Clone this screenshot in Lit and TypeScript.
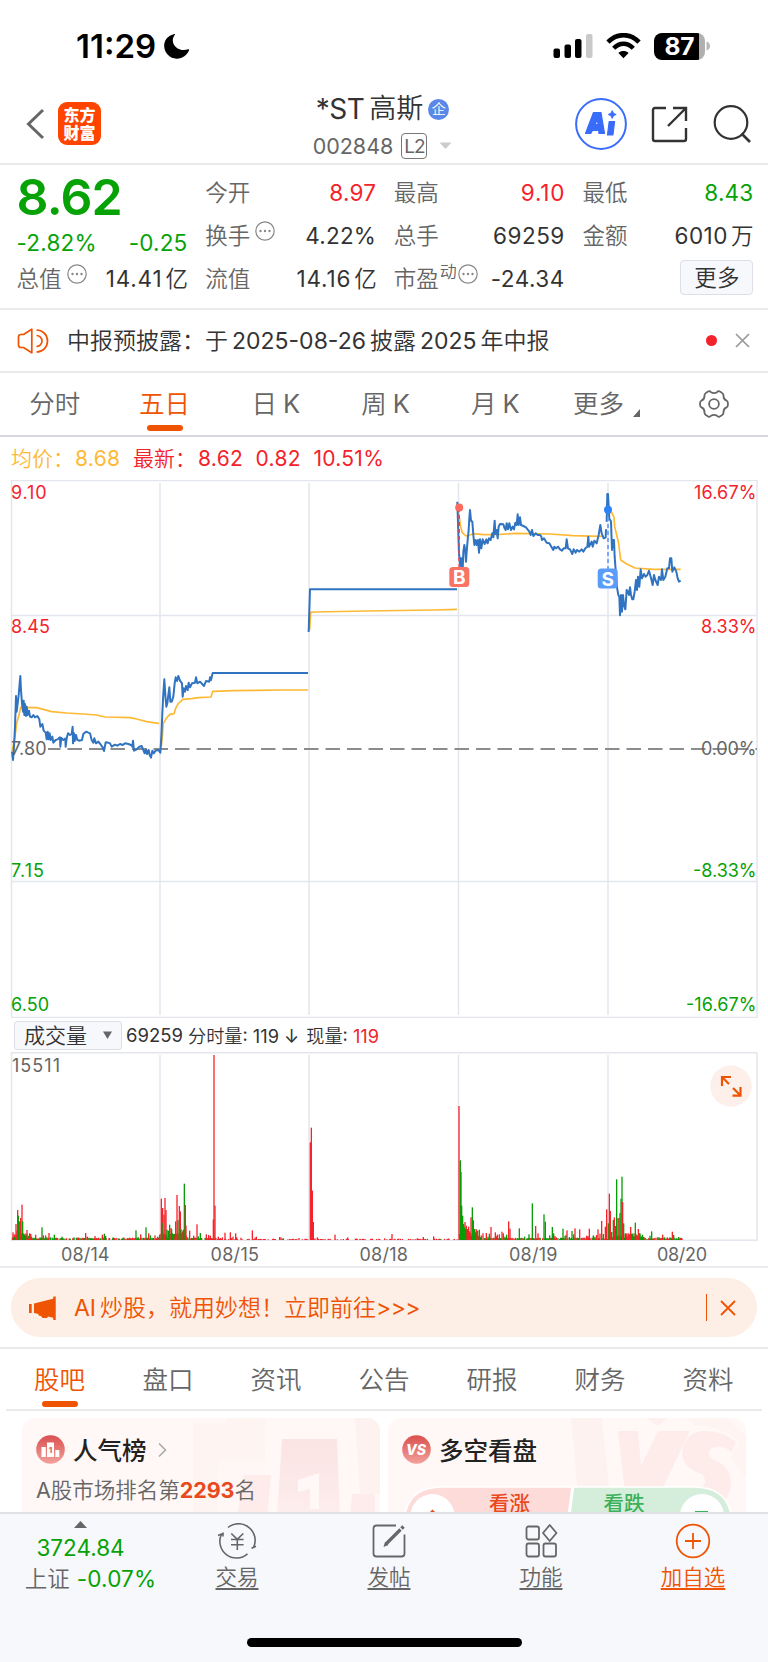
import { LitElement, html, svg, css } from "lit";
import { customElement } from "lit/decorators.js";

/* ---------- series data (thirds of a pixel) ---------- */

const PRICE_A =
  "36,515 39,540 42,500 45,440 48,348 50,395 53,370 56,345 59,310 61,288 63,330 66,370 69,395 71,362 73,405 75,372 78,408 80,380 83,405 87,392 90,410 95,412 100,405 105,412 112,408 118,418 121,440 127,432 131,452 137,458 140,478 143,455 146,478 149,460 152,480 157,470 160,488 167,480 173,478 180,472 181,500 184,474 190,480 196,476 197,500 200,475 204,460 210,465 215,462 218,440 219,490 222,460 224,483 228,465 232,480 240,482 246,480 250,462 258,455 265,458 270,460 275,480 280,488 283,475 288,490 295,485 303,495 308,502 312,513 317,487 325,488 330,490 335,500 345,494 352,497 360,492 368,495 375,490 385,492 393,495 397,500 399,482 402,512 410,508 418,500 425,498 430,510 434,520 438,508 441,522 446,510 449,525 453,533 457,512 461,520 467,512 472,510 477,512 481,518 484,470 487,400 490,340 493,298 496,345 499,380 502,370 505,345 508,322 511,365 515,365 520,350 524,310 527,292 531,303 535,288 540,302 546,310 548,350 551,325 555,335 558,318 563,330 566,308 570,322 576,310 585,308 588,292 592,310 600,305 612,318 618,303 628,305 630,292 633,300 638,279 924,279";
const PRICE_B = "926,156 930,28 1371,28";
const PRICE_C =
  "52,65 54,130 57,220 60,250 62,235 64,268 66,235 68,270 70,215 73,195 76,215 78,245 80,215 83,180 86,150 88,115 90,90 93,122 97,125 100,165 103,195 107,180 110,195 114,180 117,218 120,178 124,205 128,178 134,192 139,178 143,190 147,175 152,180 157,160 160,172 164,122 166,162 170,150 173,175 176,140 180,132 190,133 194,145 197,150 200,130 204,148 208,130 213,150 218,140 222,148 226,128 230,135 233,103 236,135 240,112 243,135 250,138 258,142 264,150 268,155 272,165 276,150 280,168 287,160 293,165 300,165 304,170 306,180 312,175 320,188 328,190 334,200 340,210 343,200 348,205 354,200 360,208 366,212 371,205 377,205 380,178 384,205 390,208 397,222 401,208 407,218 411,210 418,215 425,208 430,215 436,205 442,200 445,170 447,200 455,185 458,200 463,182 470,190 476,165 481,135 485,160 491,175 497,172 498,150 500,152";
const PRICE_D =
  "500,125 502,42 504,42 506,80 508,118 511,120 513,125 516,210 519,180 522,180 524,230 527,270 531,322 535,345 538,350 540,406 543,345 546,395 549,345 552,375 556,388 560,330 564,335 567,345 570,322 573,345 577,358 580,358 584,335 588,300 591,330 594,290 598,320 602,268 606,295 612,282 617,290 622,285 627,272 632,290 638,315 642,285 646,300 653,315 657,290 663,300 666,268 670,300 676,290 682,265 687,265 690,235 694,235 697,275 703,262 709,275 713,295 717,305 722,302";
const AVG_A =
  "36,515 45,470 50,430 57,405 62,382 110,383 130,388 155,395 200,399 250,402 290,405 315,411 390,413 410,417 440,425 460,428 477,430";
const AVG_A2 =
  "484,500 487,470 490,430 497,418 503,410 510,403 522,401 527,385 535,370 542,365 548,358 575,356 595,353 633,351 638,334 700,332 850,330 924,330";
const AVG_B = "929,150 932,97 945,96 1100,93 1300,90 1371,88";
const AVG_C =
  "54,75 56,100 62,140 67,158 78,168 90,165 100,161 130,164 180,163 230,160 330,162 400,167 480,169 490,168";
const AVG_D =
  "503,98 515,97 522,112 524,140 530,165 536,190 542,240 560,252 585,264 640,268 722,268";

/* position, top, colour */
const VOLUME =
  "39,665r 43,680g 48,640r 51,660r 53,598r 55,615g 59,632r 62,622r 66,582r 68,632g 73,672g 77,675g 81,658r 85,683r 92,670r 95,678g 102,682g 107,672r 115,684r 120,680g 126,650g 130,674r 137,674r 141,680g 147,667r 151,680g 163,672g 173,684r 180,686r 186,678g 195,684g 210,684g 222,680g 236,681r 251,682r 257,667r 262,678r 272,683g 285,676r 290,683r 296,681r 307,672r 313,669g 317,676g 327,682r 339,681g 344,682r 358,684r 372,681r 388,685g 397,681r 408,659g 415,680g 422,671r 430,683g 438,650g 446,668r 451,674g 460,682g 465,674r 473,678g 479,672g " +
  "484,564r 488,592r 486,637g 492,612r 495,562r 498,598r 501,657g 505,660g 509,642g 513,652r 515,656g 517,668g 522,678r 527,632r 531,553r 534,628g 538,586r 541,602r 543,655g 547,662r 550,657g 553,519g 556,583r 558,645r 563,680g 569,660r 575,683g 581,675r 585,680r 591,641r 595,677g 601,667g 605,682r 619,671r 626,673r 631,675r 636,684r 640,626r 642,133r 645,585r 655,678r 661,682r 667,680r 675,666r 691,665r 695,682r 699,678r 707,668r 710,680r 723,681r 757,659r 765,681r 769,678r 780,685r 791,685r 820,684r 839,679r 843,680r 850,683r 870,685r 897,682r 920,685r " +
  "931,395r 934,351r 937,540r 940,634r 945,683r 952,680r 965,685r 975,685r 985,685r 1005,672r 1030,685r 1043,680r 1070,684r 1095,685r 1130,685r 1154,683r 1176,670r 1196,684r 1207,685r 1252,683r 1270,679r 1301,677r 1318,686r 1345,684r 1362,686r " +
  "1377,286r 1381,449g 1383,484g 1385,585g 1388,615g 1391,640g 1395,634r 1393,650g 1397,655g 1399,645r 1402,655g 1406,648r 1409,662r 1413,620r 1417,590g 1420,629g 1424,655g 1429,656r 1427,665g 1433,660r 1438,657g 1443,680g 1449,668r 1455,682g 1459,667r 1468,669g 1464,678g 1473,649r 1479,682r 1486,665r 1489,677r 1492,672r 1498,671r 1501,682g 1506,663r 1510,668r 1515,678g 1520,672g 1526,632r 1530,654r 1536,682r 1544,686r 1552,683g 1558,653g 1564,686r 1574,678g 1587,671g 1597,578g 1601,683r 1607,646r 1614,668r 1620,682g 1632,611g 1636,633g 1641,682g 1649,674g 1657,649g 1661,668g 1665,676r 1669,680r 1682,682g 1689,654g 1695,676g 1698,673g 1701,659r 1708,679g 1716,661g 1721,671g 1725,653r 1732,681g 1739,656r 1747,684r 1755,681r 1760,675r 1764,676r 1768,654r 1780,674g 1785,678g 1790,673r 1794,656r 1800,669r 1805,631r 1810,670g 1816,648r 1820,596r " +
  "1825,638g 1828,549r 1831,601r 1835,664g 1840,628g 1843,620r 1847,646g 1850,506g 1854,622g 1857,622r 1860,607g 1863,564g 1866,498g 1868,574r 1871,638g 1876,668g 1881,675r 1887,672r 1892,649r 1897,669g 1902,668r 1906,636g 1911,674r 1915,655r 1920,671g 1926,676g 1932,679r 1938,684g 1950,675g 1955,662g 1964,683r 1974,679g 1988,672r 1994,680g 2002,680r 2010,680g 2017,663r 2021,673g 2036,679g 2042,682r 2046,683r";

const volumeBars = VOLUME.split(" ").map((t) => {
  const [x, rest] = t.split(",");
  return { x: +x / 3, h: (688 - parseInt(rest)) / 3, up: rest.endsWith("r") };
});

/* low trading between the listed peaks */
const quietBars = (() => {
  const out: { x: number; h: number; up: boolean }[] = [];
  let s = 7;
  const rnd = () => ((s = (s * 16807) % 2147483647) / 2147483647);
  for (let x = 12.5; x < 682; x += 0.9) {
    const dense = x < 32 || (x > 161 && x < 187) || (x > 459 && x < 482) || (x > 609 && x < 644);
    const calm = x > 216 && x < 458;
    const r = rnd();
    const up = rnd() > (calm ? 0.02 : 0.5);
    if (dense) out.push({ x, h: 2 + r * 5, up });
    else if (calm) {
      if (r > 0.62) out.push({ x, h: 0.6 + rnd() * 0.7, up });
    } else if (r > 0.22) out.push({ x, h: 0.6 + r * 1.8, up });
  }
  return out;
})();

const bar = (b: { x: number; h: number; up: boolean }) => svg`<rect
  class=${b.up ? "up" : "down"} x=${b.x - 0.65} y=${188 - b.h} width="1.3" height=${b.h}></rect>`;

const base = css`
  * { box-sizing: border-box; }
  :host {
    display: block;
    font-family: Inter, "Noto Sans CJK SC DemiLight", "Noto Sans CJK SC", sans-serif;
    color: #333;
  }
  svg { display: block; flex: none; }
  .red { color: #f4222a; }
  .green { color: #06a206; }
`;

/* ---------- status bar ---------- */
@customElement("status-bar")
class StatusBar extends LitElement {
  static styles = [base, css`
    .bar { height: 90px; display: flex; align-items: center; padding: 2px 57px 0 76px; color: #000; }
    .time { font-size: 33px; font-weight: 600; letter-spacing: 0; line-height: 40px; width: 82px; white-space: nowrap; }
    .moon { margin: 0 auto 0 5px; }
    .signal { margin-right: 13px; }
    .wifi { margin-right: 13px; }
    .battery { width: 51px; height: 27px; border-radius: 8px; display: grid; place-items: center;
      background: linear-gradient(90deg, #000 88%, #b0b0b0 88%); color: #fff;
      font-size: 24.500px; font-weight: 700; line-height: 27px; letter-spacing: -0.2px; }
    .cap { margin-left: 1px; }
  `];
  render() {
    return html`<div class="bar">
      <span class="time">11:29</span>
      <svg class="moon" width="27" height="27" viewBox="0 0 27 27"><path d="M11.5 1C4.8 2.400.8 7.500 1.200 13.600 1.600 20.500 7 25.600 13.500 25.700c6 .1 10.600-3.300 12.600-8.700.2-.6-.3-1-.9-.7C18 19 9.600 14.500 9.800 7c.1-2 .8-3.800 2.100-5.300.3-.4 0-.8-.4-.7z"/></svg>
      <svg class="signal" width="40" height="26" viewBox="0 0 40 26">
        <rect x="0.500" y="15.500" width="6.500" height="9.500" rx="2"/><rect x="11.500" y="11.500" width="6.500" height="13.500" rx="2"/>
        <rect x="22" y="6" width="6.500" height="19" rx="2"/><rect x="33" y="1" width="6.500" height="24" rx="2" fill="#c9c9c9"/></svg>
      <svg class="wifi" width="35" height="26" viewBox="0 0 35 26"><g fill="none" stroke="#000">
        <path d="M2 9.200C11-.2 24-.2 33 9.200" stroke-width="4.600"/><path d="M7.700 15.200c5.800-6 13.800-6 19.600 0" stroke-width="4.400"/></g>
        <path d="M17.500 25.200l-5.100-5.300c3-2.600 7.200-2.600 10.200 0z"/></svg>
      <span class="battery">87</span>
      <svg class="cap" width="5" height="10" viewBox="0 0 5 10"><path d="M.5.5C3 1 4 3 4 5S3 9 .5 9.500z" fill="#b8b8b8"/></svg>
    </div>`;
  }
}

/* ---------- title bar ---------- */
@customElement("title-bar")
class TitleBar extends LitElement {
  static styles = [base, css`
    .bar { height: 75px; border-bottom: 2px solid #ebebeb; display: grid; grid-template-columns: 1fr auto 1fr; padding: 0 17px 0 26px; }
    .left { display: flex; align-items: center; gap: 13px; padding-bottom: 7px; }
    .logo { width: 43px; height: 43px; border-radius: 9px; background: #ff4400; color: #fff; font-family: "Noto Sans CJK SC"; font-weight: 900;
      font-size: 16px; line-height: 18px; text-align: center; padding-top: 3px; }
    .mid { display: flex; flex-direction: column; align-items: center; margin-right: 12px; }
    .name { display: flex; align-items: center; height: 38px; font-size: 27px; line-height: 38px; white-space: nowrap; }
    .latin { letter-spacing: -0.5px; margin-right: 5px; font-size: 28px; }
    .corp { width: 21px; height: 21px; border-radius: 50%; background: #5b88e6; color: #fff; font-size: 14px; line-height: 20px; text-align: center; margin-left: 5px; font-weight: 500; }
    .code { display: flex; align-items: center; height: 36px; font-size: 21.500px; color: #666; }
    .l2 { border: 1px solid #777; border-radius: 4px; height: 26px; width: 26px; font-size: 19px; line-height: 26px; text-align: center; letter-spacing: -1px; margin: 0 12px 0 8px; }
    .right { display: flex; align-items: center; justify-content: flex-end; padding-bottom: 6px; }
    .ai { margin-right: 24px; } .share { margin-right: 25px; }
  `];
  render() {
    return html`<div class="bar">
      <div class="left">
        <svg width="19" height="32" viewBox="0 0 19 32"><path d="M17 2L2.500 16 17 30" fill="none" stroke="#666" stroke-width="3"/></svg>
        <div class="logo">东方<br>财富</div>
      </div>
      <div class="mid">
        <div class="name"><span class="latin">*ST</span>高斯<span class="corp">企</span></div>
        <div class="code"><span>002848</span><span class="l2">L2</span>
          <svg width="13" height="8" viewBox="0 0 13 8"><path d="M.5.500h12L6.500 7z" fill="#ccc"/></svg></div>
      </div>
      <div class="right">
        <svg class="ai" width="52" height="52" viewBox="0 0 52 52"><circle cx="26" cy="26" r="24.900" fill="#fff" stroke="#3a6cfb" stroke-width="2"/>
          <g fill="#3a6cfb" stroke="#3a6cfb" stroke-width="1.200" stroke-linejoin="round"><path fill-rule="evenodd" d="M10.500 35.500L18.500 14.500h7.500L29.500 35.500h-5.500L23.700 32.500h-6.200l-1.800 3zM20 26.500h3l-.5-5z"/>
          <path d="M34.200 23.500h5.400l-1.700 13.500h-5.400z"/></g><path d="M37.200 12.500l1.300 2.700 2.700 1.300-2.700 1.300-1.300 2.700-1.300-2.700-2.700-1.300 2.700-1.300z" fill="#3a6cfb" stroke="#3a6cfb" stroke-width=".8"/></svg>
        <svg class="share" width="37" height="37" viewBox="0 0 37 37"><path d="M15 2H4Q2 2 2 4V33Q2 35 4 35H33Q35 35 35 33V22M22 2H35V15M35 2L17 20" fill="none" stroke="#333" stroke-width="2.400"/></svg>
        <svg width="38" height="38" viewBox="0 0 38 38"><circle cx="18" cy="17.500" r="16.300" fill="none" stroke="#333" stroke-width="2.200"/><path d="M28.500 28.500L37 37" stroke="#333" stroke-width="2.600"/></svg>
      </div>
    </div>`;
  }
}

/* ---------- quote figures ---------- */
@customElement("quote-panel")
class QuotePanel extends LitElement {
  static styles = [base, css`
    .panel { height: 145px; border-bottom: 2px solid #ebebeb; display: grid; grid-template-columns: repeat(4, 171px); justify-content: space-between; padding: 6px 14.500px 0 16.500px; font-size: 22.500px; }
    .cell { height: 43px; line-height: 43px; display: flex; align-items: center; white-space: nowrap; }
    .cell > :last-child { margin-left: auto; letter-spacing: 0.2px; }
    .cell > .ones { letter-spacing: 0.8px; margin-right: -0.5px; }
    .cell > .wide { letter-spacing: 0.5px; }
    .label { color: #666; }
    .price { font-size: 50px; font-weight: 600; height: 53px; line-height: 53px; letter-spacing: -0.8px; }
    .change { height: 33px; line-height: 33px; display: flex; justify-content: space-between; padding-top: 2px; letter-spacing: 0.2px; }
    .last { height: 43px; }
    .dots { margin: -10px 0 0 5px; }
    .tight { margin-left: 1px; }
    .sup { font-size: 17px; color: #666; margin: -12px 0 0 1px; }
    .unit { margin-left: 3px; letter-spacing: 0; }
    .cell > .more { height: 35px; width: 73px; border: 1px solid #dcdfe8; border-radius: 4px; background: #f7f8fb; line-height: 33px; text-align: center; margin-top: -3px; }
  `];
  dots(cls: string) {
    return html`<svg class=${"dots " + cls} width="20" height="20" viewBox="0 0 20 20"><circle cx="10" cy="10" r="9.200" fill="none" stroke="#888" stroke-width="1.200"/><g fill="#888"><circle cx="5.500" cy="10" r="1.200"/><circle cx="10" cy="10" r="1.200"/><circle cx="14.500" cy="10" r="1.200"/></g></svg>`;
  }
  render() {
    return html`<div class="panel">
      <div>
        <div class="price green">8.62</div>
        <div class="change green"><span>-2.82%</span><span>-0.25</span></div>
        <div class="cell last"><span class="label">总值</span>${this.dots("")}<span class="ones">14.41<span class="unit">亿</span></span></div>
      </div>
      <div>
        <div class="cell"><span class="label">今开</span><span class="red">8.97</span></div>
        <div class="cell"><span class="label">换手</span>${this.dots("")}<span>4.22%</span></div>
        <div class="cell"><span class="label">流值</span><span class="ones">14.16<span class="unit">亿</span></span></div>
      </div>
      <div>
        <div class="cell"><span class="label">最高</span><span class="red ones">9.10</span></div>
        <div class="cell"><span class="label">总手</span><span class="wide">69259</span></div>
        <div class="cell"><span class="label">市盈</span><span class="sup">动</span>${this.dots("tight")}<span class="wide">-24.34</span></div>
      </div>
      <div>
        <div class="cell"><span class="label">最低</span><span class="green">8.43</span></div>
        <div class="cell"><span class="label">金额</span><span class="wide">6010<span class="unit">万</span></span></div>
        <div class="cell"><span class="more">更多</span></div>
      </div>
    </div>`;
  }
}

/* ---------- notice ---------- */
@customElement("notice-row")
class NoticeRow extends LitElement {
  static styles = [base, css`
    .row { height: 63px; border-bottom: 2px solid #ebebeb; display: flex; align-items: center; padding: 0 18px 0 17px; font-size: 23px; white-space: nowrap; }
    .text { margin: 0 auto 0 18px; padding-bottom: 3px; }
    .num { margin: 0 4px; }
    .dot { width: 11px; height: 11px; border-radius: 50%; background: #f4222a; margin-right: 18px; }
  `];
  render() {
    return html`<div class="row">
      <svg width="32" height="26" viewBox="0 0 32 26"><g fill="none" stroke="#ee5404" stroke-width="1.700" stroke-linejoin="round"><path d="M14.800 1.200V24.800L6.500 19.500H4Q1.500 19.500 1.500 17V9Q1.500 6.500 4 6.500H6.500z"/><path d="M19.500 7.500a5.500 5.500 0 0 1 0 11M19.500 2a11 11 0 0 1 0 22"/></g></svg>
      <span class="text">中报预披露：于<span class="num">2025-08-26</span>披露<span class="num">2025</span>年中报</span>
      <span class="dot"></span>
      <svg width="15" height="15" viewBox="0 0 15 15"><path d="M1 1L14 14M14 1L1 14" stroke="#999" stroke-width="1.700"/></svg>
    </div>`;
  }
}

/* ---------- period tabs ---------- */
@customElement("period-tabs")
class PeriodTabs extends LitElement {
  static styles = [base, css`
    .tabs { height: 64px; border-bottom: 2px solid #d8d8dc; display: grid; grid-template-columns: repeat(7, 1fr); font-size: 25.500px; color: #666; }
    .tab { display: flex; flex-direction: column; align-items: center; padding-top: 12px; line-height: 38px; }
    .line { display: flex; }
    .k { margin-left: 6px; margin-right: -3px; }
    .on { color: #ee5404; }
    .mark { width: 36px; height: 6px; border-radius: 3px; background: #ee5404; margin-top: 2px; }
    .corner { margin: 24px -6px 0 9px; }
    .gear { margin-top: 5px; margin-left: 2px; }
  `];
  render() {
    return html`<div class="tabs">
      <div class="tab">分时</div>
      <div class="tab on">五日<span class="mark"></span></div>
      <div class="tab"><span class="line">日<span class="k">K</span></span></div>
      <div class="tab"><span class="line">周<span class="k">K</span></span></div>
      <div class="tab"><span class="line">月<span class="k">K</span></span></div>
      <div class="tab"><span class="line">更多<svg class="corner" width="7" height="8" viewBox="0 0 7 8"><path d="M7 0V8H0z" fill="#666"/></svg></span></div>
      <div class="tab"><svg class="gear" width="30" height="28" viewBox="0 0 30 28"><g fill="none" stroke="#666" stroke-width="1.800" stroke-linejoin="round"><path d="M9.500 1.300Q11 .8 12 2.200Q15 4 18 2.200Q19 .8 20.500 1.300Q24.500 3.400 24.500 5.300Q24.300 9.500 27.600 10.700Q29 11.200 29 14T27.600 17.300Q24.300 18.500 24.500 22.700Q24.500 24.600 20.500 26.700Q19 27.200 18 25.800Q15 24 12 25.800Q11 27.200 9.500 26.700Q5.500 24.600 5.500 22.700Q5.700 18.500 2.400 17.300Q1 16.800 1 14T2.400 10.700Q5.700 9.500 5.500 5.300Q5.500 3.400 9.500 1.300z"/><circle cx="15" cy="14" r="4.900"/></g></svg></div>
    </div>`;
  }
}

/* ---------- charts ---------- */
@customElement("stock-charts")
class StockCharts extends LitElement {
  static styles = [base, css`
    .legend { height: 43px; padding: 0 0 0 11px; display: flex; align-items: baseline; font-size: 21px; line-height: 43px; white-space: nowrap; }
    .avg { color: #fdb935; width: 122px; }
    .avg span { letter-spacing: 0.3px; margin-left: 1px; }
    .legend .v { margin-right: 12.500px; letter-spacing: 0.3px; }
    .legend .name { margin-right: 2px; }
    .grid { stroke: #e4e6ee; fill: none; stroke-width: 1.500; }
    .dash { stroke: #8c8c8c; stroke-width: 1.800; stroke-dasharray: 14.500 7; }
    .price { stroke: #2f73c1; stroke-width: 6; fill: none; stroke-linejoin: round; }
    .mean { stroke: #fdb935; stroke-width: 5; fill: none; stroke-linejoin: round; }
    text { font-size: 18px; }
    .t-red { fill: #f4222a; } .t-green { fill: #06a206; } .t-grey { fill: #666; }
    .flag { fill: #fff; font-weight: 700; font-size: 19px; text-anchor: middle; }
    .up { fill: #f4222a; } .down { fill: #069c06; }
    .vol-head { height: 34px; display: flex; align-items: center; padding-left: 14px; font-size: 18.200px; white-space: nowrap; }
    .pick { width: 108px; height: 29px; margin-right: 4px; padding: 0 9px 0 9px; border: 1px solid #dcdfe8; border-radius: 3px; background: #f7f8fb; font-size: 21px; line-height: 27px; display: flex; align-items: center; justify-content: space-between; }
    .total { font-size: 18.500px; margin-right: 5px; }
    .now { margin-left: 7px; }
    .dates { height: 27px; border-bottom: 2px solid #ececf0; }
  `];
  render() {
    return html`
      <div class="legend"><span class="avg">均价：<span>8.68</span></span><span class="red name">最新：</span><span class="red v">8.62</span><span class="red v">0.82</span><span class="red v">10.51%</span></div>
      <svg width="768" height="538" viewBox="0 480 768 538">
        <path class="grid" d="M11.500 480.500H757V1017.500H11.500zM11.500 615.500H757M11.500 881.500H757M160 483V1015M309 483V1015M458.500 483V1015M608 483V1015"/>
        <path class="dash" d="M48 749H757" stroke-dashoffset="2"/>
        <text class="t-red" x="11" y="498.500" textLength="35.500">9.10</text>
        <text class="t-red" x="11" y="632.500" textLength="39">8.45</text>
        <text class="t-green" x="11" y="876.500" textLength="33">7.15</text>
        <text class="t-green" x="11" y="1010.500" textLength="38">6.50</text>
        <text class="t-red" x="694" y="498.500" textLength="62.500">16.67%</text>
        <text class="t-red" x="701" y="632.500" textLength="55.500">8.33%</text>
        <text class="t-grey" x="701" y="754.500" textLength="55.500">0.00%</text>
        <text class="t-green" x="693" y="876.500" textLength="63.500">-8.33%</text>
        <text class="t-green" x="686" y="1010.500" textLength="70.500">-16.67%</text>
        <g transform="translate(0 580) scale(0.33333)">
          <polyline class="mean" points=${AVG_A}/><polyline class="mean" points=${AVG_A2}/><polyline class="mean" points=${AVG_B}/>
          <polyline class="price" points=${PRICE_A}/><polyline class="price" points=${PRICE_B}/>
        </g>
        <g transform="translate(440 480) scale(0.33333)">
          <polyline class="mean" points=${AVG_C}/><polyline class="mean" points=${AVG_D}/>
          <polyline class="price" points=${PRICE_C}/><polyline class="price" points=${PRICE_D}/>
        </g>
        <text class="t-grey" x="11" y="754.500" textLength="35.500">7.80</text>
        <path d="M459.200 508V567" stroke="#f4434a" stroke-width="1.600" stroke-dasharray="4 3"/>
        <circle cx="459.200" cy="507.500" r="4" fill="#fb6a5c"/>
        <rect x="449.300" y="567" width="20" height="20" rx="3.500" fill="#fb7365"/>
        <text class="flag" x="459.300" y="584">B</text>
        <path d="M608 510V569" stroke="#5b9bfa" stroke-width="1.600" stroke-dasharray="4 3"/>
        <circle cx="608" cy="509.700" r="4" fill="#2b83f6"/>
        <rect x="597.700" y="568.500" width="20" height="20" rx="3.500" fill="#5b9bfa"/>
        <text class="flag" x="607.800" y="585.500">S</text>
      </svg>
      <div class="vol-head">
        <span class="pick">成交量<svg width="9" height="8" viewBox="0 0 9 8"><path d="M0 .500h9L4.500 8z" fill="#666"/></svg></span>
        <span class="total">69259</span><span>分时量: 119 ↓</span><span class="now">现量: <span class="red">119</span></span>
      </div>
      <svg width="768" height="189" viewBox="0 0 768 189">
        <path class="grid" d="M11.500 .700H757V188.300H11.500zM160 3V188M309 3V188M458.500 3V188M608 3V188"/>
        <text class="t-grey" x="12" y="19.500" textLength="48">15511</text>
        ${quietBars.map(bar)}${volumeBars.map(bar)}
        <circle cx="731" cy="34" r="20.700" fill="#fdf0ea"/>
        <path d="M722 34V25H731M722.500 25.500L729 32M732.500 43.700H740.500V35M740 43L733 36" fill="none" stroke="#ee5404" stroke-width="2.200"/>
      </svg>
      <div class="dates"><svg width="768" height="25" viewBox="0 0 768 25">
        <text class="t-grey" x="61" y="20" textLength="48.500">08/14</text>
        <text class="t-grey" x="210.500" y="20" textLength="48.500">08/15</text>
        <text class="t-grey" x="359.500" y="20" textLength="48.500">08/18</text>
        <text class="t-grey" x="509" y="20" textLength="48.500">08/19</text>
        <text class="t-grey" x="657" y="20" textLength="50">08/20</text>
      </svg></div>`;
  }
}

/* ---------- promo banner ---------- */
@customElement("promo-banner")
class PromoBanner extends LitElement {
  static styles = [base, css`
    .wrap { height: 81px; border-bottom: 2px solid #ebebeb; padding: 10px 11px; }
    .pill { height: 59px; border-radius: 30px; background: #fdeee6; color: #ee5404; display: flex; align-items: center; padding: 0 21px 0 18px; font-size: 23px; white-space: nowrap; }
    .text { margin: 0 auto 0 18px; padding-bottom: 3px; }
    .ai { margin-right: 4px; }
    .gt { letter-spacing: -0.6px; }
    .rule { width: 1.500px; height: 27px; background: #ee5404; margin-right: 13px; }
  `];
  render() {
    return html`<div class="wrap"><div class="pill">
      <svg width="27" height="24" viewBox="0 0 27 24"><path d="M0 8h2.700v9H0zM5 7.500L25 2.500V22L19 20.500 18 22H13.500L12 20 9.500 19.500V18L5 17z" fill="#ee5404"/><path d="M25.500 .500V24" stroke="#ee5404" stroke-width="2.500"/></svg>
      <span class="text"><span class="ai">AI</span>炒股，就用妙想！立即前往<span class="gt">&gt;&gt;&gt;</span></span>
      <span class="rule"></span>
      <svg width="16" height="16" viewBox="0 0 16 16"><path d="M1 1L15 15M15 1L1 15" stroke="#ee5404" stroke-width="1.800"/></svg>
    </div></div>`;
  }
}

/* ---------- section tabs + cards ---------- */
@customElement("community-section")
class CommunitySection extends LitElement {
  static styles = [base, css`
    .tabs { margin: 0 6px; height: 62px; border-bottom: 2px solid #ebebeb; display: grid; grid-template-columns: repeat(7, 1fr); font-size: 25.500px; color: #666; }
    .tab { display: flex; flex-direction: column; align-items: center; padding-top: 12px; line-height: 38px; }
    .on { color: #ee5404; padding-right: 1px; }
    .mark { width: 36px; height: 6px; border-radius: 3px; background: #ee5404; margin-top: 2px; }
    .cards { display: grid; grid-template-columns: 358px 358px; gap: 8px; padding: 7px 0 0 22px; }
    .card { position: relative; height: 180px; border-radius: 13px; overflow: hidden; background: #fff8f6; padding: 17px 14px 0; }
    .art { position: absolute; right: 0; top: 0; }
    .body { position: relative; }
    .head { display: flex; align-items: center; height: 29px; font-size: 24.500px; font-weight: 500; color: #222; gap: 8px; font-family: Inter, "Noto Sans CJK SC", sans-serif; }
    .arrow { margin-left: 3px; }
    .rank { font-size: 21.500px; line-height: 32px; margin-top: 10px; color: #666; white-space: nowrap; }
    .rank b { color: #e8491d; font-weight: 700; letter-spacing: -0.1px; }
    .vs { font-weight: 800; font-style: italic; font-size: 14px; fill: #fff; text-anchor: middle; }
    .one { font-weight: 800; font-size: 8px; fill: #e06763; text-anchor: middle; }
    .poll { margin: 22px -14px 0; }
    .call { font-size: 20.500px; font-weight: 500; font-family: "Noto Sans CJK SC", sans-serif; }
    .rise { fill: #e8491d; } .fall { fill: #3cb15c; }
  `];
  render() {
    const disc = svg`<defs><linearGradient id="d" x1="0" y1="0" x2="0" y2="1"><stop offset="0" stop-color="#d9504f"/><stop offset="1" stop-color="#f3a19c"/></linearGradient></defs><circle cx="14.500" cy="14.500" r="14.300" fill="url(#d)"/>`;
    return html`
      <div class="tabs">
        <div class="tab on">股吧<span class="mark"></span></div>
        ${["盘口", "资讯", "公告", "研报", "财务", "资料"].map((t) => html`<div class="tab">${t}</div>`)}
      </div>
      <div class="cards">
        <div class="card">
          <svg class="art" width="190" height="100" viewBox="0 0 190 100">
            <defs><linearGradient id="fade" x1="0" y1="0" x2="0" y2="1"><stop offset="0" stop-color="#fae3e3"/><stop offset="1" stop-color="#fdeeed"/></linearGradient></defs>
            <path d="M3 5H36V0H76L74 57H54L50 100H3z" fill="#fef4f2"/><path d="M29 43H74V57H54L50 100H27z" fill="#fff7f5"/>
            <path d="M54 57H81L77 100H47z" fill="#fdecea"/><path d="M92 21H147L150 100H87z" fill="url(#fade)"/>
            <path d="M108 62L126 56H129V91H120V71L108 74z" fill="#fff8f6"/><path d="M165 0H190V76H170z" fill="#fef2f0"/><path d="M162 76H185V100H160z" fill="#fdeceb"/>
          </svg>
          <div class="body">
            <div class="head"><svg width="29" height="29" viewBox="0 0 29 29">${disc}<path d="M5.500 12H9.800V22H5.500zM11 7.500H18V22H11zM19.300 15H23.300V22H19.300z" fill="#fff"/><text class="one" x="14.500" y="17.500">1</text></svg>人气榜
              <svg class="arrow" width="9" height="16" viewBox="0 0 9 16"><path d="M1 1.500L7.500 8 1 14.500" fill="none" stroke="#aaa" stroke-width="1.600"/></svg></div>
            <div class="rank">A股市场排名第<b>2293</b>名</div>
          </div>
        </div>
        <div class="card">
          <svg class="art" width="190" height="100" viewBox="0 0 190 100">
            <path d="M15 0H46L56 100H24z" fill="#fef2f0"/><path d="M90 0H112L102 8z" fill="#fdf0ee"/>
            <path d="M62 13H82L85 48 102 13H134L100 84H70z" fill="#fdecea"/>
            <path d="M180 24Q166 12 148 13Q128 14 126 36Q127 50 146 56Q152 62 146 70H104L98 92H154Q174 86 175 64Q174 48 158 42Q148 36 156 30Q166 26 176 34z" fill="#fdecea"/><path d="M130 0H170L190 18V60L174 40 184 24Q160 6 140 8z" fill="#fef4f2"/>
          </svg>
          <div class="body">
            <div class="head"><svg width="29" height="29" viewBox="0 0 29 29">${disc}<text class="vs" x="14" y="19.800">VS</text></svg>多空看盘</div>
            <svg class="poll" width="358" height="60" viewBox="0 0 358 60">
              <path d="M16 40Q16 1 54 1H184L176 60H16z" fill="#fddbd9" stroke="#fff" stroke-width="1.500"/>
              <path d="M185.500 1H306Q344 1 344 40V60H178z" fill="#d5eedb" stroke="#fff" stroke-width="1.500"/>
              <circle cx="44.500" cy="30" r="22" fill="#fff"/><circle cx="314" cy="30" r="22" fill="#fff"/>
              <path d="M44.500 23.500L49 28H40z" fill="#e8491d"/><path d="M307 25h13v3h-13z" fill="#3cb15c"/>
              <text class="call rise" x="101" y="24.500">看涨</text><text class="call fall" x="215.500" y="24.500">看跌</text>
            </svg>
          </div>
        </div>
      </div>`;
  }
}

/* ---------- bottom bar ---------- */
@customElement("bottom-bar")
class BottomBar extends LitElement {
  static styles = [base, css`
    .bar { height: 150px; background: #f7f8fb; border-top: 2px solid #dfe1e5; display: flex; flex-direction: column; align-items: center; }
    .items { display: grid; grid-template-columns: 161px repeat(4, 152px); height: 124px; align-self: stretch; color: #666; }
    .item { display: flex; flex-direction: column; align-items: center; padding-top: 9px; font-size: 21.500px; }
    .item u { margin-top: 2px; line-height: 32px; text-underline-offset: 2.500px; text-decoration-thickness: 1.500px; }
    .index { padding-top: 7px; white-space: nowrap; line-height: 32px; font-size: 22.500px; }
    .value { margin-top: 4px; letter-spacing: 0; }
    .second { padding-left: 20px; margin-top: -1px; }
    .pct { letter-spacing: 0.2px; margin-left: 7px; }
    .add { color: #ee5404; }
    .home { width: 275px; height: 9px; border-radius: 5px; background: #000; }
  `];
  render() {
    return html`<div class="bar">
      <div class="items">
        <div class="item index">
          <svg width="13" height="7" viewBox="0 0 13 7"><path d="M6.500 0L13 7H0z" fill="#666"/></svg>
          <span class="value green">3724.84</span>
          <span class="second">上证<span class="green pct">-0.07%</span></span>
        </div>
        <div class="item"><svg width="40" height="36" viewBox="0 0 40 36"><g fill="none" stroke="#666" stroke-width="1.600"><path d="M11 4.500A16.600 16.600 0 0 1 36.500 24.500M39 23.300L34.500 25.200M4.600 11A16.600 16.600 0 0 0 30.500 30.800M1 12.500L6 10.500V13.500"/><path d="M14.300 10.500L20.300 16.300 26.300 10.500M20.300 16.300V27M14 16.500H26.600M14 21.700H26.600"/></g></svg><u>交易</u></div>
        <div class="item"><svg width="36" height="36" viewBox="0 0 36 36"><path d="M25 2.500H5.500Q2.500 2.500 2.500 5.500V30.500Q2.500 33.500 5.500 33.500H30.500Q33.500 33.500 33.500 30.500V11.500" fill="none" stroke="#666" stroke-width="1.800"/><path d="M15 21L29.500 6.500" stroke="#666" stroke-width="3.200"/><path d="M12.500 24L14 19 17.500 22z" fill="#666"/><path d="M30.500 5.500L32.500 3.500" stroke="#666" stroke-width="3.600"/></svg><u>发帖</u></div>
        <div class="item"><svg width="36" height="36" viewBox="0 0 36 36"><g fill="none" stroke="#666" stroke-width="1.800" stroke-linejoin="round"><rect x="3.500" y="3.500" width="12.500" height="13" rx="2"/><rect x="3.500" y="20.500" width="12.500" height="13" rx="2"/><rect x="20.500" y="20.500" width="12.500" height="13" rx="2"/><path d="M26.700 2L33.500 10 26.700 18 20 10z"/></g></svg><u>功能</u></div>
        <div class="item add"><svg width="36" height="36" viewBox="0 0 36 36"><g fill="none" stroke="#ee5404" stroke-width="1.800"><circle cx="18" cy="18" r="16.300"/><path d="M18 10V26M10 18H26"/></g></svg><u>加自选</u></div>
      </div>
      <div class="home"></div>
    </div>`;
  }
}

@customElement("app-root")
class AppRoot extends LitElement {
  static styles = [base, css`
    :host { width: 768px; height: 1662px; overflow: hidden; background: #fff; display: flex; flex-direction: column; }
    .content { flex: 1; min-height: 0; overflow: hidden; }
  `];
  render() {
    return html`
      <div class="content">
        <status-bar></status-bar>
        <title-bar></title-bar>
        <quote-panel></quote-panel>
        <notice-row></notice-row>
        <period-tabs></period-tabs>
        <stock-charts></stock-charts>
        <promo-banner></promo-banner>
        <community-section></community-section>
      </div>
      <bottom-bar></bottom-bar>`;
  }
}
